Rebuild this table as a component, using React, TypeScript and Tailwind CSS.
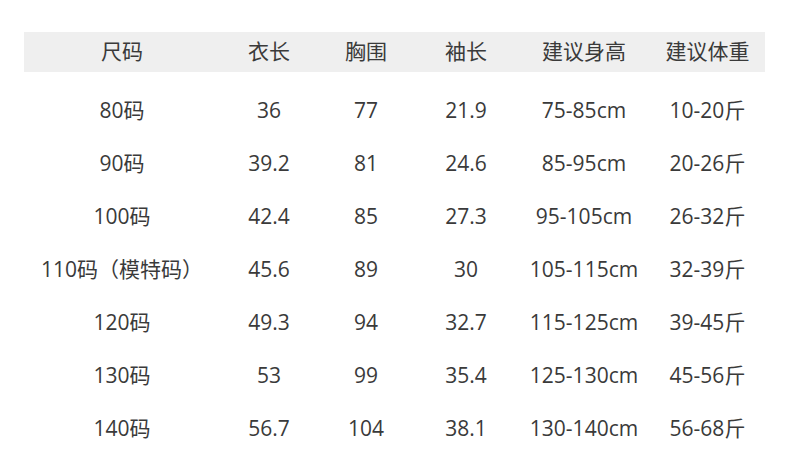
import React from "react";

const header = ["尺码", "衣长", "胸围", "袖长", "建议身高", "建议体重"];
const rows = [
  ["80码", "36", "77", "21.9", "75-85cm", "10-20斤"],
  ["90码", "39.2", "81", "24.6", "85-95cm", "20-26斤"],
  ["100码", "42.4", "85", "27.3", "95-105cm", "26-32斤"],
  ["110码（模特码）", "45.6", "89", "30", "105-115cm", "32-39斤"],
  ["120码", "49.3", "94", "32.7", "115-125cm", "39-45斤"],
  ["130码", "53", "99", "35.4", "125-130cm", "45-56斤"],
  ["140码", "56.7", "104", "38.1", "130-140cm", "56-68斤"],
];
const widths = ["w-[196px]", "w-[98px]", "w-[96px]", "w-[104px]", "w-[132px]", "w-[115px]"];

export default function App() {
  return (
    <div
      className="w-[800px] h-[452px] bg-white text-[#3a3a3a] text-[21px] pt-[32px] pl-[24px]"
      style={{ fontFamily: '"Open Sans", "Noto Sans CJK SC", sans-serif' }}
    >
      <div className="flex w-[741px] h-[40px] bg-[#efefef] items-center">
        {header.map((h, i) => (
          <div key={i} className={`${widths[i]} text-center`}>{h}</div>
        ))}
      </div>
      <div className="pt-[12px]">
        {rows.map((r, ri) => (
          <div key={ri} className="flex h-[53px] items-center">
            {r.map((c, i) => (
              <div key={i} className={`${widths[i]} text-center whitespace-nowrap`}>{c}</div>
            ))}
          </div>
        ))}
      </div>
    </div>
  );
}
